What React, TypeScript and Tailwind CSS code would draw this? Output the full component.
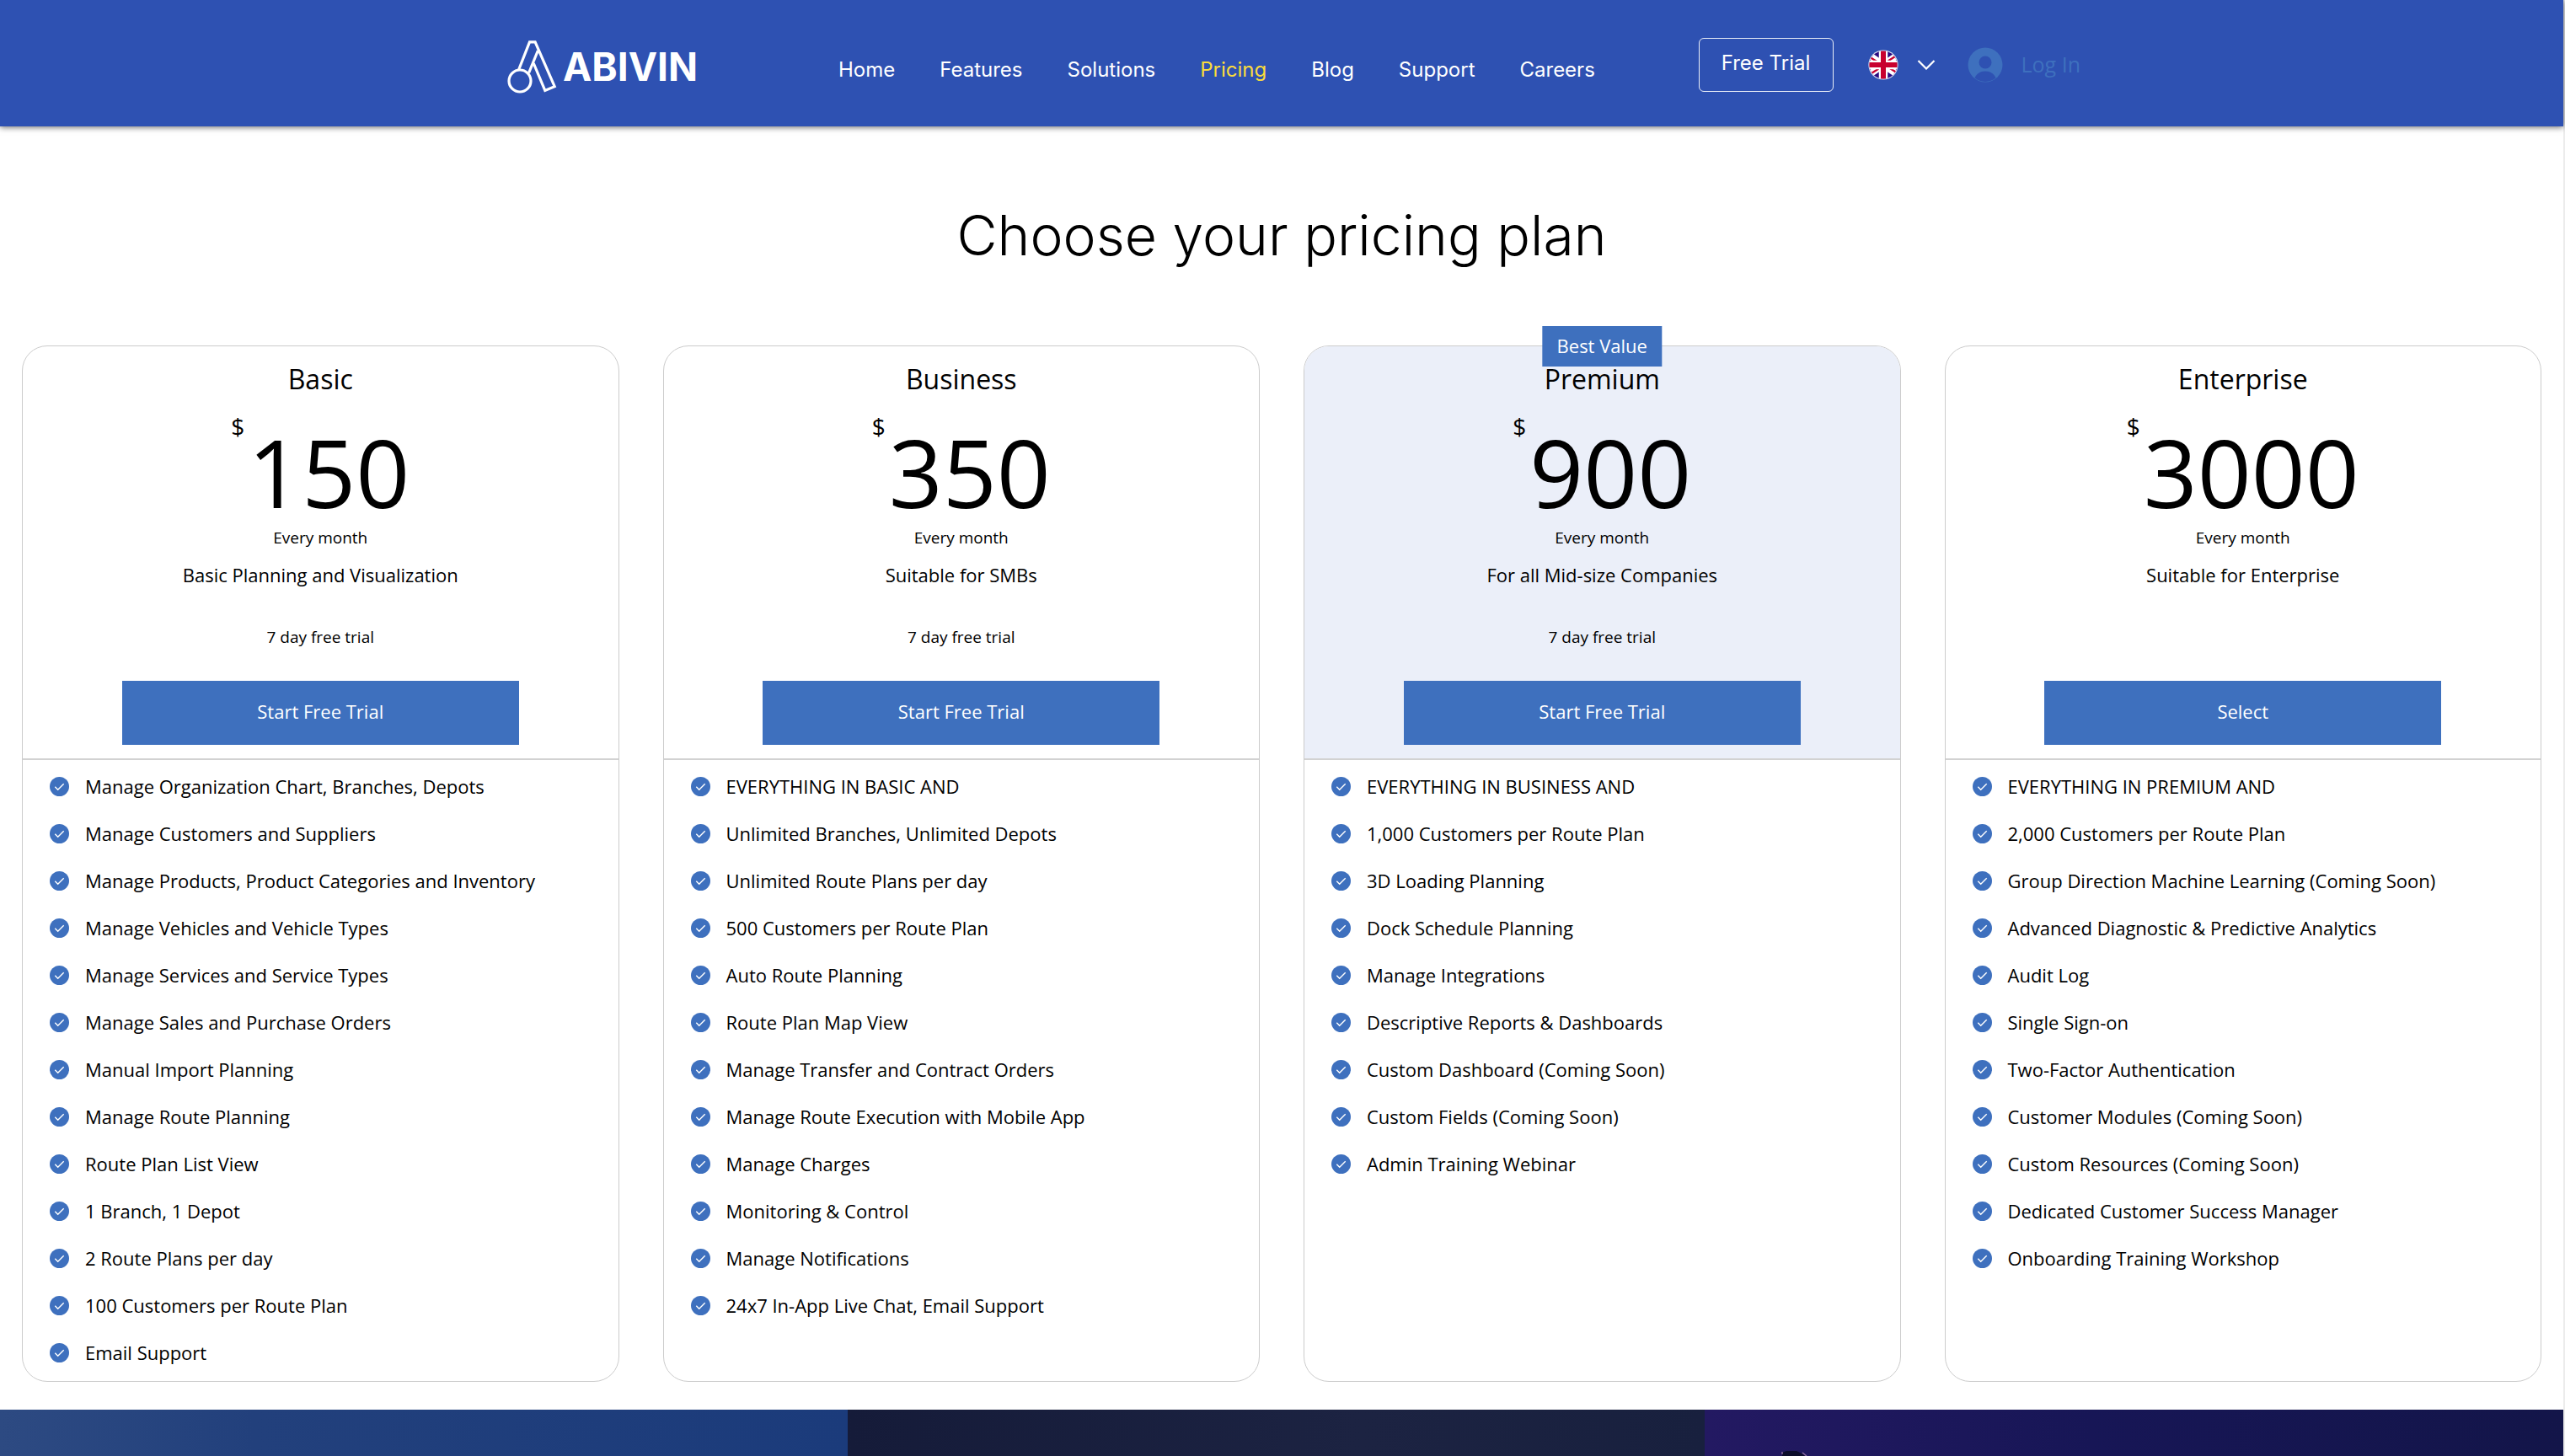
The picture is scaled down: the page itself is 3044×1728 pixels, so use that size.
type Plan = {
  name: string;
  price: string;
  tagline: string;
  trial?: string;
  action: string;
  badge?: string;
  features: string[];
};

const navItems = ["Home", "Features", "Solutions", "Pricing", "Blog", "Support", "Careers"];

const plans: Plan[] = [
  {
    name: "Basic",
    price: "150",
    tagline: "Basic Planning and Visualization",
    trial: "7 day free trial",
    action: "Start Free Trial",
    features: [
      "Manage Organization Chart, Branches, Depots",
      "Manage Customers and Suppliers",
      "Manage Products, Product Categories and Inventory",
      "Manage Vehicles and Vehicle Types",
      "Manage Services and Service Types",
      "Manage Sales and Purchase Orders",
      "Manual Import Planning",
      "Manage Route Planning",
      "Route Plan List View",
      "1 Branch, 1 Depot",
      "2 Route Plans per day",
      "100 Customers per Route Plan",
      "Email Support",
    ],
  },
  {
    name: "Business",
    price: "350",
    tagline: "Suitable for SMBs",
    trial: "7 day free trial",
    action: "Start Free Trial",
    features: [
      "EVERYTHING IN BASIC AND",
      "Unlimited Branches, Unlimited Depots",
      "Unlimited Route Plans per day",
      "500 Customers per Route Plan",
      "Auto Route Planning",
      "Route Plan Map View",
      "Manage Transfer and Contract Orders",
      "Manage Route Execution with Mobile App",
      "Manage Charges",
      "Monitoring & Control",
      "Manage Notifications",
      "24x7 In-App Live Chat, Email Support",
    ],
  },
  {
    name: "Premium",
    price: "900",
    tagline: "For all Mid-size Companies",
    trial: "7 day free trial",
    action: "Start Free Trial",
    badge: "Best Value",
    features: [
      "EVERYTHING IN BUSINESS AND",
      "1,000 Customers per Route Plan",
      "3D Loading Planning",
      "Dock Schedule Planning",
      "Manage Integrations",
      "Descriptive Reports & Dashboards",
      "Custom Dashboard (Coming Soon)",
      "Custom Fields (Coming Soon)",
      "Admin Training Webinar",
    ],
  },
  {
    name: "Enterprise",
    price: "3000",
    tagline: "Suitable for Enterprise",
    action: "Select",
    features: [
      "EVERYTHING IN PREMIUM AND",
      "2,000 Customers per Route Plan",
      "Group Direction Machine Learning (Coming Soon)",
      "Advanced Diagnostic & Predictive Analytics",
      "Audit Log",
      "Single Sign-on",
      "Two-Factor Authentication",
      "Customer Modules (Coming Soon)",
      "Custom Resources (Coming Soon)",
      "Dedicated Customer Success Manager",
      "Onboarding Training Workshop",
    ],
  },
];

function LogoMark() {
  return (
    <svg className="h-[66px] w-[62px]" viewBox="0 0 62 66" fill="none" stroke="#fff" strokeWidth="3.2" aria-hidden="true">
      <circle cx="17" cy="50" r="13" />
      <path d="M15.5 37 28.5 3.8h6.6L58.2 56.6 46.8 61.4 33.2 29" />
      <path d="M38.4 14 27.6 40.5" />
    </svg>
  );
}

function FlagIcon() {
  return (
    <svg className="size-9" viewBox="0 0 36 36" aria-hidden="true">
      <defs>
        <clipPath id="flag-disc">
          <circle cx="18" cy="18" r="16.6" />
        </clipPath>
      </defs>
      <circle cx="18" cy="18" r="17.6" fill="#dfe3f2" />
      <g clipPath="url(#flag-disc)">
        <path d="M0 0h36v36H0z" fill="#2b0a80" />
        <path d="M-4 3 40 33M40 3-4 33" stroke="#fff" strokeWidth="8" />
        <path d="M0 7.5 18 19M36 5.5 18 17M0 30.5 18 19M36 28.5 18 17" stroke="#c8012f" strokeWidth="2.4" />
        <path d="M18 0v36M0 18h36" stroke="#fff" strokeWidth="10.5" />
        <path d="M18 0v36M0 18h36" stroke="#c8012f" strokeWidth="6" />
      </g>
    </svg>
  );
}

function UserIcon() {
  return (
    <svg className="size-[42px]" viewBox="0 0 42 42" aria-hidden="true">
      <circle cx="21" cy="21" r="20.5" fill="#3e70be" />
      <circle cx="21" cy="18" r="7.5" fill="#2e51b2" />
      <path d="M8.5 36.5C10.5 31.5 15 28.5 21 28.5s10.5 3 12.500 8a20 20 0 0 1-25 0Z" fill="#2e51b2" />
    </svg>
  );
}

function CheckIcon() {
  return (
    <svg className="size-[23px] shrink-0" viewBox="0 0 23 23" fill="none" aria-hidden="true">
      <circle cx="11.5" cy="11.5" r="11.5" fill="#3e70be" />
      <path d="m6.3 11.8 3.4 3.400 7-7" stroke="#fff" strokeWidth="1.4" />
    </svg>
  );
}

function Header() {
  return (
    <header className="relative bg-[#2e51b2] font-['Inter',sans-serif] text-2xl text-white shadow-[0_1px_7px_rgba(0,0,0,0.6)]">
      <div className="mx-auto flex h-[150px] max-w-[1960px] items-center pt-1 pl-[59px]">
        <a href="#" className="flex items-center gap-1.5 pt-1" aria-label="Abivin">
          <LogoMark />
          <span className="text-[46px] leading-none font-bold">ABIVIN</span>
        </a>
        <nav className="ml-[167px] flex gap-[53px] pt-3">
          {navItems.map((item) => (
            <a key={item} href="#" className={item === "Pricing" ? "text-[#fbdc3c]" : "text-white"}>
              {item}
            </a>
          ))}
        </nav>
        <div className="ml-auto flex items-center pr-8">
          <button className="h-16 w-40 rounded-md border border-white/90 pb-1">Free Trial</button>
          <button className="ml-[41px] flex items-center gap-[22px]" aria-label="Language: English">
            <FlagIcon />
            <svg className="h-3 w-[22px]" viewBox="0 0 22 12" fill="none" stroke="#fff" strokeWidth="2.2" aria-hidden="true">
              <path d="m1.5 1 9.5 9.5L20.5 1" />
            </svg>
          </button>
          <button className="ml-[38px] flex items-center gap-[22px] font-['Open_Sans',sans-serif] text-[25px] text-[#3e70be]">
            <UserIcon />
            Log In
          </button>
        </div>
      </div>
    </header>
  );
}

function PlanCard({ plan }: { plan: Plan }) {
  return (
    <article className="relative rounded-[30px] border border-[#ccc]">
      {plan.badge && (
        <div className="absolute -top-6 left-1/2 flex h-12 -translate-x-1/2 items-center bg-[#3e70be] px-[17px] pb-0.5 text-[22px] whitespace-nowrap text-white">
          {plan.badge}
        </div>
      )}
      <div
        className={`flex flex-col items-center rounded-t-[29px] border-b-2 border-[#d2d2d2] pt-[15px] pb-4 text-center ${
          plan.badge ? "bg-[#ebeff9]" : ""
        }`}
      >
        <h2 className="text-[32px] leading-12">{plan.name}</h2>
        <p className="mt-[18px] flex items-start gap-1">
          <span className="text-[28px] leading-7">$</span>
          <span className="pt-3 text-[112px] leading-none">{plan.price}</span>
        </p>
        <p className="mt-2 text-[19px] leading-7">Every month</p>
        <p className="mt-3.5 text-[22px] leading-8">{plan.tagline}</p>
        <p className="mt-11 min-h-7 text-[19px] leading-7">{plan.trial}</p>
        <button className="mt-[38px] h-19 w-2/3 bg-[#3e70be] pb-1 text-[22px] text-white">{plan.action}</button>
      </div>
      <ul className="px-8 pt-[3px] pb-[6px]">
        {plan.features.map((feature) => (
          <li key={feature} className="flex h-14 items-center gap-[19px] text-[22px]">
            <CheckIcon />
            {feature}
          </li>
        ))}
      </ul>
    </article>
  );
}

export default function App() {
  return (
    <div className="border-r-2 border-[#ececec] bg-white font-['Open_Sans',sans-serif] text-black">
      <Header />
      <main>
        <h1 className="pt-[89px] text-center font-['Inter',sans-serif] text-[66px] leading-[80px] font-light">
          Choose your pricing plan
        </h1>
        <section className="grid grid-cols-4 gap-[52px] px-[26px] pt-[91px] pb-[33px]">
          {plans.map((plan) => (
            <PlanCard key={plan.name} plan={plan} />
          ))}
        </section>
        <section className="grid h-[55px] grid-cols-[1006fr_1017fr_1019fr] overflow-hidden">
          <div className="bg-linear-to-r from-[#2d4a82] via-[#22407c] via-30% to-[#1b3b7b]" />
          <div className="bg-linear-to-r from-[#151b39] via-[#1c2342] via-60% to-[#18203e]" />
          <div className="bg-linear-to-r from-[#231962] via-[#171656] via-45% to-[#131549]">
            <svg className="ml-[84px] h-[55px] w-12" viewBox="0 0 48 55" aria-hidden="true">
              <path d="M8 55V51l5-2h12l6 3 4 3Z" fill="#0c0d2b" />
              <path d="M8 50v3M32 51l5 4" stroke="#8a6a9c" strokeWidth="1.5" />
            </svg>
          </div>
        </section>
      </main>
    </div>
  );
}
